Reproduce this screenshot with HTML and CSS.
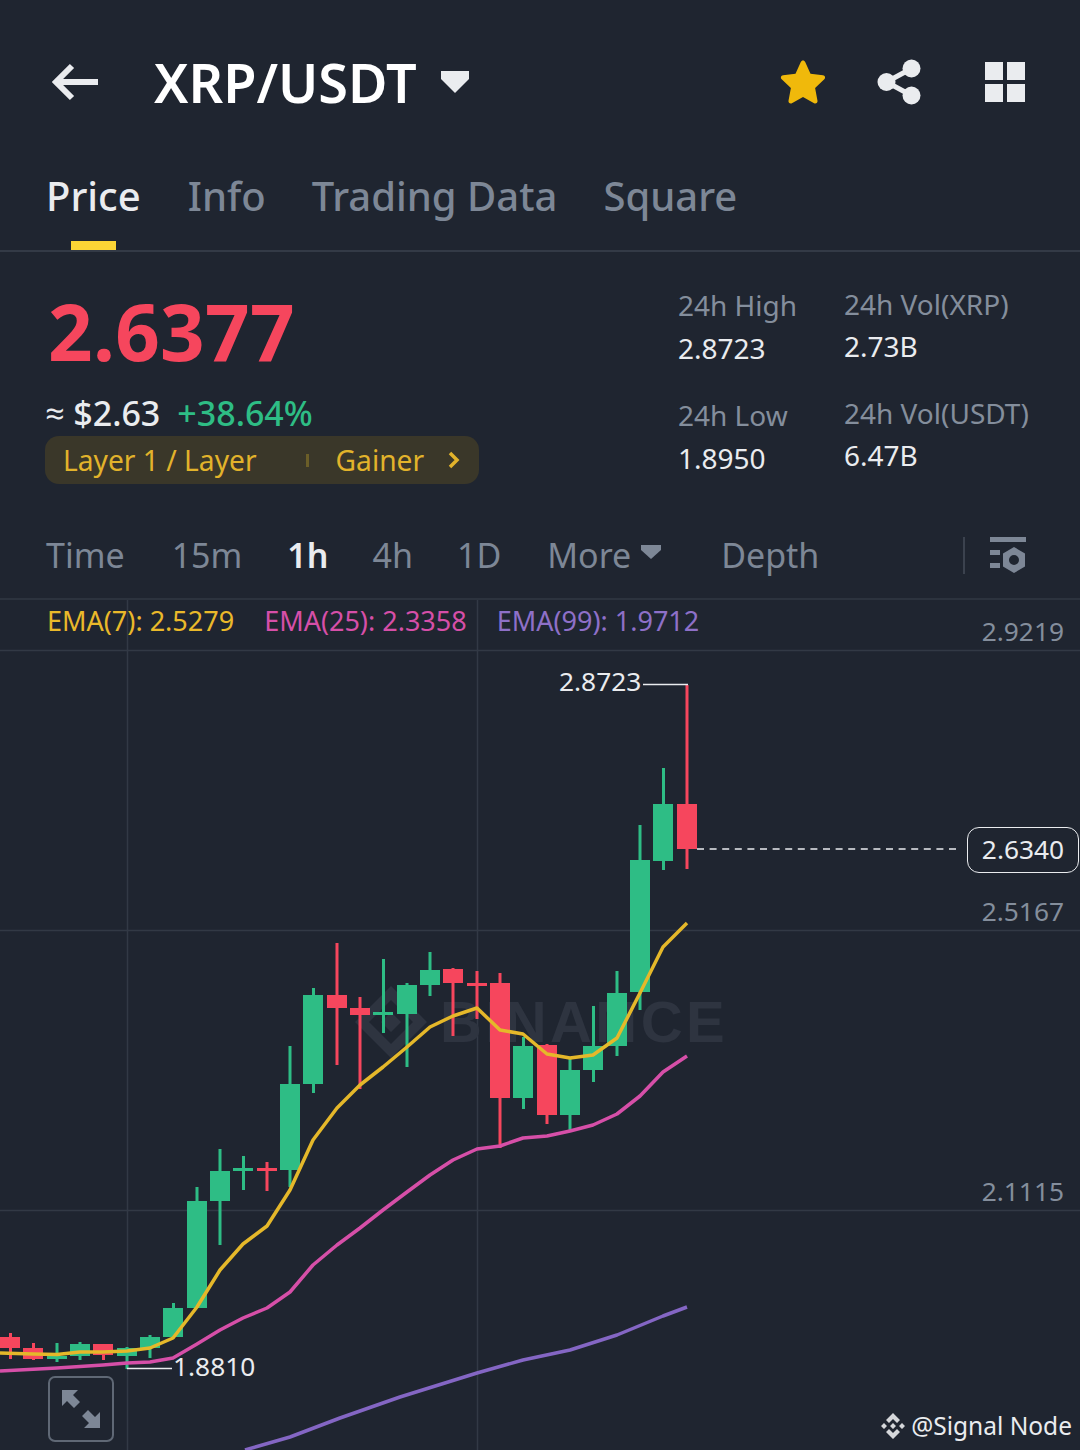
FILE: index.html
```html
<!DOCTYPE html>
<html lang="en">
<head>
<meta charset="utf-8">
<title>XRP/USDT</title>
<link rel="stylesheet" href="styles.css">
</head>
<body>
<main class="screen">
  <header class="topbar">
    <svg class="back" viewBox="0 0 48 38" aria-hidden="true"><path d="M46 19H5M20 3 4 19l16 16" /></svg>
    <h1 class="pair">XRP/USDT</h1>
    <svg class="caret" viewBox="0 0 28 22" aria-hidden="true"><path d="M0 0h28v8L14 22 0 8z"/></svg>
    <div class="actions">
      <svg class="star" viewBox="0 0 46 46" aria-hidden="true"><path d="M23 1.500c1 0 1.800.6 2.200 1.500l5.300 11.700 12.500 1.500c2 .3 2.800 2.600 1.300 4l-9.200 8.700 2.400 12.800c.4 2-1.700 3.400-3.400 2.500L23 37.900l-11.100 6.300c-1.700 1-3.800-.5-3.400-2.500l2.400-12.800L1.700 20.200c-1.500-1.400-.7-3.700 1.300-4l12.500-1.500L20.800 3c.4-.9 1.200-1.500 2.200-1.500z"/></svg>
      <svg class="share" viewBox="0 0 44 46" aria-hidden="true"><circle cx="34.500" cy="9.500" r="9"/><circle cx="9.500" cy="23" r="9"/><circle cx="34.500" cy="36.500" r="9"/><path d="M34.500 9.500 9.500 23l25 13.500"/></svg>
      <svg class="apps" viewBox="0 0 40 40" aria-hidden="true"><path d="M0 0h18v18H0zM22 0h18v18H22zM0 22h18v18H0zM22 22h18v18H22z"/></svg>
    </div>
  </header>

  <nav class="tabs">
    <a class="tab tab-on">Price</a>
    <a class="tab">Info</a>
    <a class="tab">Trading Data</a>
    <a class="tab">Square</a>
  </nav>

  <section class="summary">
    <div class="quote">
      <div class="last">2.6377</div>
      <div class="fiat"><span class="usd">≈ $2.63</span><span class="change">+38.64%</span></div>
      <div class="tag">
        <span>Layer 1 / Layer</span>
        <i class="tag-sep"></i>
        <span>Gainer</span>
        <svg class="tag-arrow" viewBox="0 0 12 18" aria-hidden="true"><path d="M2 2l7 7-7 7"/></svg>
      </div>
    </div>
    <dl class="stats stats-a">
      <div class="stat"><dt>24h High</dt><dd>2.8723</dd></div>
      <div class="stat"><dt>24h Low</dt><dd>1.8950</dd></div>
    </dl>
    <dl class="stats stats-b">
      <div class="stat"><dt>24h Vol(XRP)</dt><dd>2.73B</dd></div>
      <div class="stat"><dt>24h Vol(USDT)</dt><dd>6.47B</dd></div>
    </dl>
  </section>

  <div class="ranges">
    <span class="range r-time">Time</span>
    <span class="range r-15">15m</span>
    <span class="range r-1h">1h</span>
    <span class="range r-4h">4h</span>
    <span class="range r-1d">1D</span>
    <span class="range r-more">More<svg class="more-caret" viewBox="0 0 20 14" aria-hidden="true"><path d="M0 0h20v5l-10 9L0 5z"/></svg></span>
    <span class="range r-depth">Depth</span>
    <i class="range-sep"></i>
    <svg class="settings" viewBox="0 0 36 36" aria-hidden="true">
      <path d="M0 0h36v5H0zM0 13h10v5H0zM0 26h10v5H0z"/>
      <path fill-rule="evenodd" d="M24 10l11 6.500v13L24 36l-11-6.500v-13zM24 18a5 5 0 1 0 0 10 5 5 0 0 0 0-10z"/>
    </svg>
  </div>

  <section class="chart">
    <svg class="plot" viewBox="0 600 1080 850" aria-hidden="true">
      <g class="grid">
        <path d="M0 650.500H1080M0 930.500H1080M0 1210.500H1080M127.500 600V1450M477.500 600V1450"/>
      </g>
      <g class="mark">
        <path fill-rule="evenodd" d="M391 986l36 36-36 36-36-36zM391 1000l22 22-22 22-22-22zM391 1012l10 10-10 10-10-10z"/>
        <text x="440" y="1042">BINANCE</text>
      </g>
      <g class="up">
        <path class="wick" d="M57 1343V1362M80 1342V1360M127 1347V1369M150 1335V1358M173.500 1303V1337M197 1187V1308M220 1149V1245M243.500 1156V1190M290 1046V1187M313.500 988V1093M383.500 959V1033M407 983V1067M430 952V996M523.500 1037V1109M570 1058V1130M593.500 1006V1082M617 971V1056M640 825V1010M663.500 768V870"/>
        <rect x="47" y="1356" height="3"/><rect x="70" y="1344" height="12"/><rect x="117" y="1348" height="8"/><rect x="140" y="1337" height="11"/><rect x="163" y="1308" height="29"/><rect x="187" y="1201" height="107"/><rect x="210" y="1171" height="30"/><rect x="233" y="1168" height="3"/><rect x="280" y="1084" height="86"/><rect x="303" y="995" height="89"/><rect x="373" y="1012" height="3"/><rect x="397" y="985" height="29"/><rect x="420" y="970" height="15"/><rect x="513" y="1046" height="52"/><rect x="560" y="1070" height="45"/><rect x="583" y="1046" height="24"/><rect x="607" y="993" height="53"/><rect x="630" y="860" height="132"/><rect x="653" y="804" height="57"/>
      </g>
      <g class="down">
        <path class="wick" d="M10.500 1333V1359M33.500 1343V1360M103.500 1344V1360M267 1162V1191M337 943V1065M360 997V1089M453 968V1036M477 971V1019M500 973V1148M547 1044V1124M687 685V869"/>
        <rect x="0" y="1337" height="11"/><rect x="23" y="1348" height="11"/><rect x="93" y="1344" height="11"/><rect x="257" y="1168" height="3"/><rect x="327" y="995" height="13"/><rect x="350" y="1008" height="7"/><rect x="443" y="969" height="14"/><rect x="467" y="983" height="3"/><rect x="490" y="983" height="115"/><rect x="537" y="1045" height="70"/><rect x="677" y="804" height="45"/>
      </g>
      <polyline class="ema e7" points="0,1353 33,1354 57,1354.500 80,1352 103,1352 127,1351 150,1348 173,1338 197,1307 220,1270 243,1244 267,1226 290,1190 313,1140 337,1108 360,1085 383,1067 407,1047 430,1027 453,1016 477,1008 500,1030 523,1034 547,1054 570,1058 593,1055 617,1038 640,993 663,947 687,923"/>
      <polyline class="ema e25" points="0,1371 57,1368 103,1365 127,1363 150,1362 173,1358 197,1344 220,1330 243,1318 267,1308 290,1292 313,1265 337,1245 360,1228 383,1210 407,1192 430,1175 453,1160 477,1149 500,1146 523,1138 547,1136 570,1131 593,1125 617,1114 640,1096 663,1072 687,1056"/>
      <polyline class="ema e99" points="245,1450 290,1437 340,1418 400,1397 477,1373 523,1360 570,1350 617,1335 663,1316 687,1307"/>
      <path class="lead" d="M643 684.500H688M127 1368.500H172"/>
      <path class="last-line" d="M697 849H957"/>
    </svg>

    <div class="legend">
      <span class="l7">EMA(7): 2.5279</span>
      <span class="l25">EMA(25): 2.3358</span>
      <span class="l99">EMA(99): 1.9712</span>
    </div>

    <span class="axis a1">2.9219</span>
    <span class="axis a2">2.5167</span>
    <span class="axis a3">2.1115</span>
    <span class="now">2.6340</span>
    <span class="extreme hi">2.8723</span>
    <span class="extreme lo">1.8810</span>

    <button class="expand" aria-label="Expand">
      <svg viewBox="0 0 38 38" aria-hidden="true"><path d="M0 0h16L11 5l7 7-6 6-7-7-5 5zM38 38H22l5-5-7-7 6-6 7 7 5-5z"/></svg>
    </button>

    <div class="credit">
      <svg viewBox="0 0 28 28" aria-hidden="true"><path d="M14 1l7 7-3 3-4-4-4 4-3-3zM5 11l3 3-3 3-3-3zM23 11l3 3-3 3-3-3zM14 11l3 3-3 3-3-3zM14 27l7-7-3-3-4 4-4-4-3 3z"/></svg>
      <span>@Signal Node</span>
    </div>
  </section>
</main>
</body>
</html>
```

FILE: styles.css
```css
* { box-sizing: border-box; margin: 0; padding: 0; }
html, body { background: #1f2530; }
body {
  width: 1080px;
  height: 1450px;
  overflow: hidden;
  font-family: "Noto Sans", "Open Sans", sans-serif;
  color: #eaecef;
}
.screen { width: 1080px; height: 1450px; display: flex; flex-direction: column; }

/* Top bar */
.topbar { height: 170px; padding: 0 55px 6px 52px; display: flex; align-items: center; }
.back { width: 48px; height: 38px; fill: none; stroke: #eaecef; stroke-width: 6; }
.pair { margin-left: 54px; font-size: 54px; line-height: 1; font-weight: 600; color: #fff; }
.caret { width: 28px; height: 22px; margin-left: 24px; fill: #eaecef; }
.actions { margin-left: auto; display: flex; align-items: center; }
.star { width: 46px; height: 46px; fill: #f0b90b; }
.share { width: 44px; height: 46px; margin-left: 51px; fill: #eaecef; stroke: #eaecef; stroke-width: 5; }
.share circle { stroke: none; }
.share path { fill: none; }
.apps { width: 40px; height: 40px; margin-left: 64px; fill: #eaecef; }

/* Tabs */
.tabs { height: 82px; padding-left: 46px; display: flex; gap: 46px; border-bottom: 2px solid #333a46; }
.tab { position: relative; font-size: 40px; line-height: 52px; font-weight: 500; color: #7d8796; }
.tab-on { color: #eaecef; margin-right: 1px; }
.tab-on::after {
  content: "";
  position: absolute;
  left: 25px;
  bottom: 0;
  width: 45px;
  height: 9px;
  background: #fcd535;
}

/* Summary */
.summary { height: 265px; padding: 29px 0 0 45px; display: flex; }
.quote { width: 633px; display: flex; flex-direction: column; }
.last { font-size: 78px; line-height: 100px; font-weight: 700; color: #f6465d; padding-left: 3px; letter-spacing: 0.300px; }
.fiat { margin-top: 13px; display: flex; gap: 17px; font-size: 34px; line-height: 38px; font-weight: 500; }
.change { color: #2ebd85; }
.tag {
  margin-top: 4px;
  width: 434px;
  height: 48px;
  border-radius: 14px;
  background: #3a3729;
  color: #e2b32b;
  font-size: 28.200px;
  line-height: 48px;
  padding-left: 18px;
  display: flex;
  align-items: center;
}
.tag-sep { width: 3px; height: 13px; margin: 0 27px 0 49px; background: #6b5e28; }
.tag-arrow { width: 12px; height: 18px; margin-left: 24px; fill: none; stroke: #e2b32b; stroke-width: 3.500; }

.stats { display: flex; flex-direction: column; }
.stats-a { width: 166px; padding-top: 4px; gap: 27px; }
.stats-b { padding-top: 3px; gap: 27px; }
.stat { display: flex; flex-direction: column; }
.stat dt { font-size: 28px; line-height: 40px; color: #848e9c; }
.stat dd { font-size: 28px; line-height: 40px; margin-top: 3px; color: #eaecef; }
.stats-b .stat dd { margin-top: 2px; }

/* Ranges */
.ranges { height: 86px; margin-top: -3px; padding: 0 54px 2px 46px; display: flex; align-items: center; border-bottom: 2px solid #2c333e; font-size: 34px; color: #7d8796; }
.range { line-height: 48px; display: flex; align-items: center; }
.r-15 { margin-left: 47px; }
.r-1h { margin-left: 45px; color: #eaecef; font-weight: 600; }
.r-4h { margin-left: 44px; }
.r-1d { margin-left: 44px; }
.r-more { margin-left: 46px; }
.more-caret { width: 20px; height: 14px; margin: -6px 0 0 10px; fill: #7d8796; }
.r-depth { margin-left: 60px; }
.range-sep { margin-left: auto; width: 2px; height: 37px; background: #3b424e; }
.settings { width: 36px; height: 36px; margin-left: 25px; fill: #7d8796; }

/* Chart */
.chart { position: relative; flex: 1; min-height: 0; overflow: hidden; }
.plot { position: absolute; left: 0; top: 0; width: 1080px; height: 850px; display: block; }
.grid path { stroke: #323945; stroke-width: 1.500; fill: none; }
.mark { fill: #2e3440; }
.mark text { font-family: "Liberation Sans", sans-serif; font-size: 58px; font-weight: 700; letter-spacing: 3.400px; }
.up rect { fill: #2ebd85; width: 20px; shape-rendering: crispEdges; }
.down rect { fill: #f6465d; width: 20px; shape-rendering: crispEdges; }
.wick { stroke-width: 3; fill: none; }
.up .wick { stroke: #2ebd85; }
.down .wick { stroke: #f6465d; }
.ema { fill: none; stroke-width: 3.500; stroke-linejoin: round; }
.e7 { stroke: #e5b82a; }
.e25 { stroke: #d64fa8; }
.e99 { stroke: #8466c4; }
.lead { stroke: #eaecef; stroke-width: 1.500; fill: none; }
.last-line { stroke: #eaecef; stroke-width: 1.500; stroke-dasharray: 7 5.600; fill: none; }

.legend { position: absolute; left: 47px; top: 2px; display: flex; gap: 30px; font-size: 27px; line-height: 38px; }
.l7 { color: #eab92a; }
.l25 { color: #d64fa8; }
.l99 { color: #8e70c8; }

.axis { position: absolute; right: 16px; font-size: 26.300px; line-height: 36px; color: #848e9c; }
.a1 { top: 13px; }
.a2 { top: 293px; }
.a3 { top: 573px; }
.now {
  position: absolute;
  left: 967px;
  top: 227px;
  width: 112px;
  height: 46px;
  border: 1.500px solid #eaecef;
  border-radius: 12px;
  background: #1f2530;
  font-size: 26.300px;
  line-height: 42px;
  text-align: center;
}
.extreme { position: absolute; font-size: 26.300px; line-height: 36px; color: #eaecef; }
.hi { left: 559px; top: 63px; }
.lo { left: 173px; top: 748px; }

.expand {
  position: absolute;
  left: 48px;
  top: 776px;
  width: 66px;
  height: 66px;
  border: 2px solid #5f6875;
  border-radius: 7px;
  background: #1f2530;
  display: flex;
  align-items: center;
  justify-content: center;
}
.expand svg { width: 38px; height: 38px; fill: #7d8796; }

.credit { position: absolute; right: 8px; top: 808px; display: flex; align-items: center; gap: 4px; font-size: 24.500px; line-height: 36px; color: #eaecef; }
.credit svg { width: 28px; height: 28px; fill: #d5d7da; }
```
